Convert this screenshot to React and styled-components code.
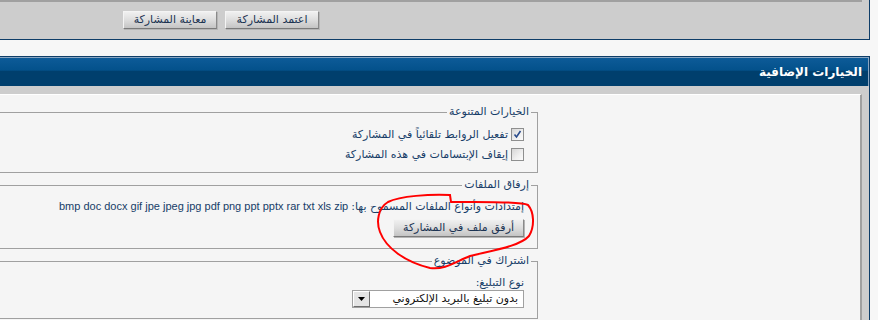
import React from 'react';
import styled, { createGlobalStyle } from 'styled-components';

const NAVY = '#0e3d68';

const Global = createGlobalStyle`
  html, body { margin: 0; padding: 0; background: #f7f7f7; overflow: hidden; }
`;

const Page = styled.div`
  direction: rtl;
  width: 878px;
  height: 320px;
  position: relative;
  overflow: hidden;
  font-family: "Liberation Sans", "DejaVu Sans", sans-serif;
  font-size: 11px;
  color: #0d3763;
`;

const TopPanel = styled.div`
  box-sizing: border-box;
  width: 1000px;
  height: 40px;
  margin-right: 8px;
  background: #cdcdcd;
  border-right: 1px solid ${NAVY};
  border-bottom: 1px solid ${NAVY};
  padding-right: 7px;
`;

const EditorEdge = styled.div`
  height: 0;
  border-bottom: 2px solid #a0a0a0;
  border-right: 2px solid #a0a0a0;
`;

const ButtonRow = styled.div`
  display: flex;
  gap: 8px;
  margin-top: 9px;
  padding-right: 543px;
`;

const Button = styled.button`
  box-sizing: border-box;
  width: ${p => p.$w || 94}px;
  height: 18px;
  padding: 0;
  font-family: "DejaVu Sans", sans-serif;
  font-size: 11px;
  line-height: 14px;
  color: #1b3352;
  background: linear-gradient(to bottom, #f0f0f0 0%, #dddddd 50%, #c4c4c4 100%);
  border: 1px solid;
  border-color: #f4f4f4 #8a8a8a #7a7a7a #f4f4f4;
  box-shadow: 1px 1px 0 #b5b5b5;
  direction: rtl;
`;

const OptionsPanel = styled.div`
  width: 1000px;
  margin-top: 16px;
  margin-right: 8px;
  background: #cdcdcd;
  border: 1px solid ${NAVY};
  border-left: none;
  border-bottom: none;
`;

const Header = styled.div`
  box-sizing: border-box;
  height: 29px;
  border-top: 1px solid #8aa6c2;
  border-right: 1px solid #8aa6c2;
  background: linear-gradient(to bottom, #0d5b98 0%, #03518b 44%, #003f6d 46%, #003f6d 100%);
  padding-right: 6px;
  color: #ffffff;
  font-family: "DejaVu Sans", sans-serif;
  font-weight: bold;
  font-size: 12px;
  line-height: 28px;
`;

const PanelBody = styled.div`
  padding: 8px 7px 0 0;
`;

const Content = styled.div`
  background: #f5f5f5;
  border-top: 1px solid #ffffff;
  border-right: 2px solid #a0a0a0;
  padding: 10px 322px 20px 0;
  display: flex;
  flex-direction: column;
  align-items: flex-start;
  gap: 5px;
  height: 240px;
`;

const Fieldset = styled.fieldset`
  width: 640px;
  margin: 0;
  border: 1px solid #a0a0a0;
  padding: 0 6px ${p => p.$pb || 8}px;
  min-inline-size: auto;
`;

const Legend = styled.legend`
  padding: 0 2px;
  font-family: "DejaVu Sans", sans-serif;
  font-size: 11px;
  line-height: 14px;
  color: #173d68;
`;

const FieldBody = styled.div`
  padding: ${p => p.$pt || 0}px 7px 0;
  display: flex;
  flex-direction: column;
  align-items: flex-start;
`;

const CheckRow = styled.label`
  display: flex;
  align-items: center;
  gap: 3px;
  height: 20px;
  font-family: "DejaVu Sans", sans-serif;
  font-size: 11px;
  color: #173d68;
`;

const Box = styled.span`
  box-sizing: border-box;
  width: 13px;
  height: 13px;
  border: 1px solid #8e8f8f;
  background: linear-gradient(135deg, #d6d6d6 0%, #f0f0f0 60%, #fbfbfb 100%);
  display: flex;
  align-items: center;
  justify-content: center;
`;

const TextLine = styled.div`
  line-height: 16px;
  margin-top: 6px;
  font-size: 11px;
  color: #173d68;
  white-space: nowrap;
`;

const ArabicSpan = styled.span`
  font-family: "DejaVu Sans", sans-serif;
  font-size: 11px;
`;

const AttachWrap = styled.div`
  margin-top: 4px;
`;

const Label = styled.div`
  margin-top: 8px;
  line-height: 14px;
  font-family: "DejaVu Sans", sans-serif;
  font-size: 11px;
  color: #173d68;
`;

const Select = styled.div`
  box-sizing: border-box;
  width: 172px;
  height: 18px;
  background: #ffffff;
  border: 1px solid #a0a0a0;
  display: flex;
  align-items: center;
`;

const SelectValue = styled.div`
  flex: 1;
  padding-right: 5px;
  font-family: "DejaVu Sans", sans-serif;
  font-size: 11px;
  color: #111;
  line-height: 16px;
`;

const Arrow = styled.div`
  box-sizing: border-box;
  width: 17px;
  height: 16px;
  background: #e4e4e4;
  border: 1px solid;
  border-color: #ffffff #6e6e6e #6e6e6e #ffffff;
  display: flex;
  align-items: center;
  justify-content: center;
`;

const Annotation = styled.svg`
  position: absolute;
  left: 0;
  top: 0;
  width: 878px;
  height: 320px;
  pointer-events: none;
`;

const Check = ({ on }) => (
  <Box>
    {on && (
      <svg width="9" height="9" viewBox="0 0 9 9">
        <path d="M1.5 4.5 L3.5 7 L7.5 1" fill="none" stroke="#2a4c8c" strokeWidth="1.6" />
      </svg>
    )}
  </Box>
);

export default function App() {
  return (
    <Page>
      <Global />
      <TopPanel>
        <EditorEdge />
        <ButtonRow>
          <Button>اعتمد المشاركة</Button>
          <Button>معاينة المشاركة</Button>
        </ButtonRow>
      </TopPanel>
      <OptionsPanel>
        <Header>الخيارات الإضافية</Header>
        <PanelBody>
          <Content>
            <Fieldset $pb={8}>
              <Legend>الخيارات المتنوعة</Legend>
              <FieldBody $pt={5}>
                <CheckRow><Check on />تفعيل الروابط تلقائياً في المشاركة</CheckRow>
                <CheckRow><Check />إيقاف الإبتسامات في هذه المشاركة</CheckRow>
              </FieldBody>
            </Fieldset>
            <Fieldset $pb={11}>
              <Legend>إرفاق الملفات</Legend>
              <FieldBody>
                <TextLine>
                  <ArabicSpan>إمتدادات وأنواع الملفات المسموح بها:</ArabicSpan> bmp doc docx gif jpe jpeg jpg pdf png ppt pptx rar txt xls zip
                </TextLine>
                <AttachWrap>
                  <Button $w={131}>أرفق ملف في المشاركة</Button>
                </AttachWrap>
              </FieldBody>
            </Fieldset>
            <Fieldset $pb={10}>
              <Legend>اشتراك في الموضوع</Legend>
              <FieldBody>
                <Label>نوع التبليغ:</Label>
                <Select>
                  <SelectValue>بدون تبليغ بالبريد الإلكتروني</SelectValue>
                  <Arrow>
                    <svg width="7" height="4" viewBox="0 0 7 4"><path d="M0 0 H7 L3.5 4 Z" fill="#000" /></svg>
                  </Arrow>
                </Select>
              </FieldBody>
            </Fieldset>
          </Content>
        </PanelBody>
      </OptionsPanel>
      <Annotation viewBox="0 0 878 320">
        <path
          d="M451 202 L450 195 C430 194, 400 196, 388 202 C378 208, 376 222, 380 232 C386 248, 405 262, 430 268 C445 270, 455 262, 470 256 C495 250, 520 246, 529 236 C535 226, 534 212, 528 205 C520 201, 480 202, 451 202"
          fill="none"
          stroke="#ff0000"
          strokeWidth="2"
          strokeLinecap="round"
        />
      </Annotation>
    </Page>
  );
}
